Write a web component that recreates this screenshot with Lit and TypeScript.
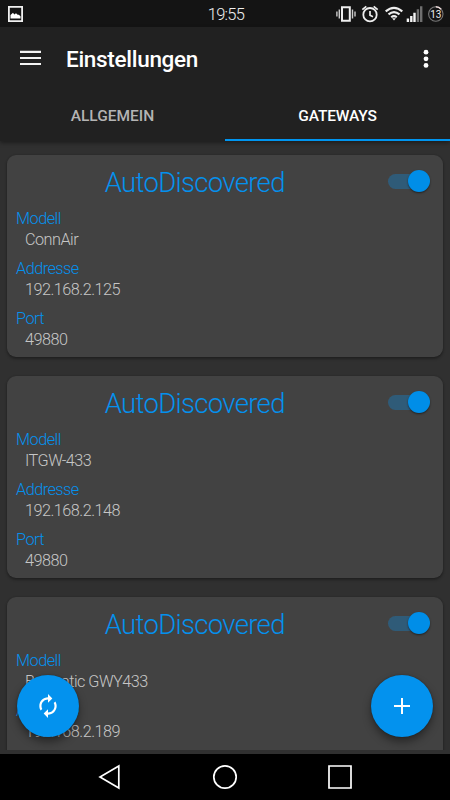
import { LitElement, html, css, svg } from "lit";
import { customElement, property } from "lit/decorators.js";

interface Gateway {
  name: string;
  model: string;
  address: string;
  port?: string;
}

const gateways: Gateway[] = [
  { name: "AutoDiscovered", model: "ConnAir", address: "192.168.2.125", port: "49880" },
  { name: "AutoDiscovered", model: "ITGW-433", address: "192.168.2.148", port: "49880" },
  { name: "AutoDiscovered", model: "Brematic GWY433", address: "192.168.2.189" },
];

@customElement("gateway-card")
class GatewayCard extends LitElement {
  @property({ attribute: false }) gateway!: Gateway;

  static styles = css`
    :host {
      display: block;
      flex: none;
      box-sizing: border-box;
      height: 202.2px;
      padding: 12px 9px 0;
      border-radius: 9px;
      background: #424242;
      box-shadow: 0 2px 3px rgba(0, 0, 0, 0.3), 0 0 2px rgba(0, 0, 0, 0.2);
      font-weight: 300;
    }
    .head {
      display: grid;
      grid-template-columns: 1fr 42px;
      align-items: start;
      height: 32px;
      padding-right: 4px;
    }
    .title {
      text-align: center;
      padding-right: 14.5px;
      font-size: 27.5px;
      line-height: 32px;
      letter-spacing: -0.67px;
      color: #0491ee;
    }
    .switch {
      display: flex;
      align-items: center;
      justify-content: flex-end;
      width: 42px;
      height: 15px;
      margin-top: 7px;
      border-radius: 8px;
      background: linear-gradient(90deg, #2f5b78 36px, transparent 36px);
    }
    .knob {
      width: 22px;
      height: 22px;
      margin-top: -1px;
      border-radius: 50%;
      background: #008ee8;
      box-shadow: 0 1px 2px rgba(0, 0, 0, 0.5);
    }
    .list {
      margin: 9px 0 0;
      font-size: 16.25px;
      letter-spacing: -0.52px;
    }
    .label {
      height: 21px;
      line-height: 21px;
      color: #0491ee;
    }
    .value {
      margin: 0 0 8px 9px;
      height: 21px;
      line-height: 21px;
      color: #c6c6c6;
    }
  `;

  render() {
    const g = this.gateway;
    const rows = [["Modell", g.model], ["Addresse", g.address], ["Port", g.port]].filter((row) => row[1]);
    return html`
      <div class="head">
        <div class="title">${g.name}</div>
        <div class="switch"><div class="knob"></div></div>
      </div>
      <dl class="list">
        ${rows.map(([k, v]) => html`<dt class="label">${k}</dt><dd class="value">${v}</dd>`)}
      </dl>
    `;
  }
}

const wifiArcs = svg`
  <path d="M1.2 6.2Q9.5-.8 17.8 6.2M4 9.2q5.5-4.6 11 0M6.7 12q2.8-2.3 5.6 0" fill="none" stroke="#eee" stroke-width="2.1"/>
  <path d="M7.6 13.1h3.8L9.5 15.3z" fill="#eee"/>`;

@customElement("app-root")
class AppRoot extends LitElement {
  static styles = css`
    :host {
      display: flex;
      flex-direction: column;
      position: relative;
      width: 450px;
      height: 800px;
      overflow: hidden;
      background: #303030;
      font-family: Roboto, sans-serif;
      color: #fff;
    }
    svg { display: block; }
    .status {
      flex: none;
      display: grid;
      grid-template-columns: 1fr auto 1fr;
      align-items: center;
      height: 27px;
      padding: 0 6px 0 8px;
      background: #141414;
    }
    .clock {
      height: 24px;
      padding-top: 3px;
      font-size: 16.5px;
      font-weight: 300;
      line-height: 24px;
      letter-spacing: -0.7px;
      color: #f0f0f0;
    }
    .tray { justify-self: end; }
    .top {
      flex: none;
      height: 114px;
      background: #212121;
      box-shadow: 0 2px 4px rgba(0, 0, 0, 0.4);
      z-index: 1;
    }
    .bar {
      display: flex;
      align-items: center;
      height: 63px;
      padding: 0 20px;
    }
    .burger { margin-top: -2px; }
    .heading {
      flex: 1;
      margin: 0 0 0 25px;
      font-size: 22.5px;
      font-weight: 500;
      letter-spacing: -0.3px;
    }
    .tabs {
      display: grid;
      grid-template-columns: 1fr 1fr;
      height: 51px;
    }
    .tab {
      box-sizing: border-box;
      height: 51px;
      padding-top: 3px;
      text-align: center;
      font-size: 15.5px;
      font-weight: 500;
      line-height: 46px;
      color: #b4b4b4;
    }
    .active {
      color: #fff;
      letter-spacing: -0.15px;
      border-bottom: 2px solid #0095f0;
    }
    .content {
      flex: none;
      box-sizing: border-box;
      display: flex;
      flex-direction: column;
      gap: 19px;
      height: 609px;
      padding: 14px 7px 0;
      overflow: hidden;
    }
    .fab {
      position: absolute;
      top: 675px;
      display: grid;
      place-items: center;
      width: 62px;
      height: 62px;
      border-radius: 50%;
      background: #0392ee;
      box-shadow: 0 5px 9px rgba(0, 0, 0, 0.4), 0 0 2px rgba(0, 0, 0, 0.3);
    }
    .refresh { left: 17px; }
    .add { left: 371px; }
    .nav {
      flex: none;
      display: flex;
      justify-content: center;
      align-items: center;
      height: 46px;
      margin-top: auto;
      background: #000;
    }
  `;

  render() {
    return html`
      <div class="status">
        <svg width="15" height="16" viewBox="0 0 15 16">
          <path d="M.9.9h13.2v14.2H.9z" fill="none" stroke="#f0f0f0" stroke-width="1.8"/>
          <path d="M2.5 12.5V9L5 6.8l1.3 1.6L8 7.3l1.7 1.5h1.1l1.7 1.4v2.3z" fill="#fff"/>
        </svg>
        <div class="clock">19:55</div>
        <svg class="tray" width="108" height="18" viewBox="0 0 108 18">
          <path d="M6 2.2h7.8v13.6H6z" fill="none" stroke="#eee" stroke-width="2"/>
          <path d="M3.3 4.5v9M16.5 4.5v9M.9 6.5v5M19 6.5v5" stroke="#ccc" stroke-width="1.4"/>
          <circle cx="34" cy="9.7" r="6.7" fill="none" stroke="#eee" stroke-width="1.8"/>
          <path d="M34 6v4.3l3 1.4M26.3 4.6l4-3.3M41.7 4.6l-4-3.3" fill="none" stroke="#eee" stroke-width="1.7"/>
          <g transform="translate(48.5 .2)">${wifiArcs}</g>
          <path d="M70.7 13.5h2.4V17h-2.4zM74.1 11h2.4v6h-2.4zM77.3 7.7h2.4V17h-2.4z" fill="#f4f4f4"/>
          <path d="M80.7 4.3h2.4V17h-2.4zM84 1.2h2.4V17H84z" fill="#6f6f6f"/>
          <circle cx="99.8" cy="9" r="7.2" fill="none" stroke="#777" stroke-width="1.1"/>
          <path d="M99.8 1.8a7.2 7.2 0 0 1 5.3 2.4" fill="none" stroke="#f2dede" stroke-width="1.5"/>
          <text x="99.8" y="12.6" text-anchor="middle" font-size="10" fill="#eee">13</text>
        </svg>
      </div>
      <header class="top">
        <div class="bar">
          <svg class="burger" width="21" height="16" viewBox="0 0 21 16">
            <path d="M0 1.9h21M0 8h21M0 14h21" stroke="#f4f4f4" stroke-width="2.2"/>
          </svg>
          <h1 class="heading">Einstellungen</h1>
          <svg width="8" height="20" viewBox="0 0 8 20">
            <g fill="#fff"><circle cx="4" cy="3.2" r="2.4"/><circle cx="4" cy="9.8" r="2.4"/><circle cx="4" cy="16.4" r="2.4"/></g>
          </svg>
        </div>
        <nav class="tabs">
          <div class="tab">ALLGEMEIN</div>
          <div class="tab active">GATEWAYS</div>
        </nav>
      </header>
      <main class="content">
        ${gateways.map((g) => html`<gateway-card .gateway=${g}></gateway-card>`)}
      </main>
      <div class="fab refresh">
        <svg width="26" height="26" viewBox="0 0 24 24" fill="#fff">
          <path d="M12 6v3l4-4-4-4v3c-4.42 0-8 3.58-8 8 0 1.57.46 3.03 1.24 4.26L6.7 14.8A5.87 5.87 0 0 1 6 12c0-3.31 2.69-6 6-6zm6.76 1.74L17.3 9.2c.44.84.7 1.79.7 2.8 0 3.31-2.69 6-6 6v-3l-4 4 4 4v-3c4.42 0 8-3.58 8-8 0-1.57-.46-3.03-1.24-4.26z"/>
        </svg>
      </div>
      <div class="fab add">
        <svg width="16" height="16" viewBox="0 0 16 16">
          <path d="M8 0v16M0 8h16" stroke="#fff" stroke-width="2"/>
        </svg>
      </div>
      <footer class="nav">
        <svg width="254" height="26" viewBox="0 0 254 26" fill="none" stroke="#fff" stroke-width="1.7">
          <path d="M20.8 2v22L2 13z"/>
          <circle cx="127" cy="13" r="11.2"/>
          <path d="M231 2h22v22h-22z"/>
        </svg>
      </footer>
    `;
  }
}
